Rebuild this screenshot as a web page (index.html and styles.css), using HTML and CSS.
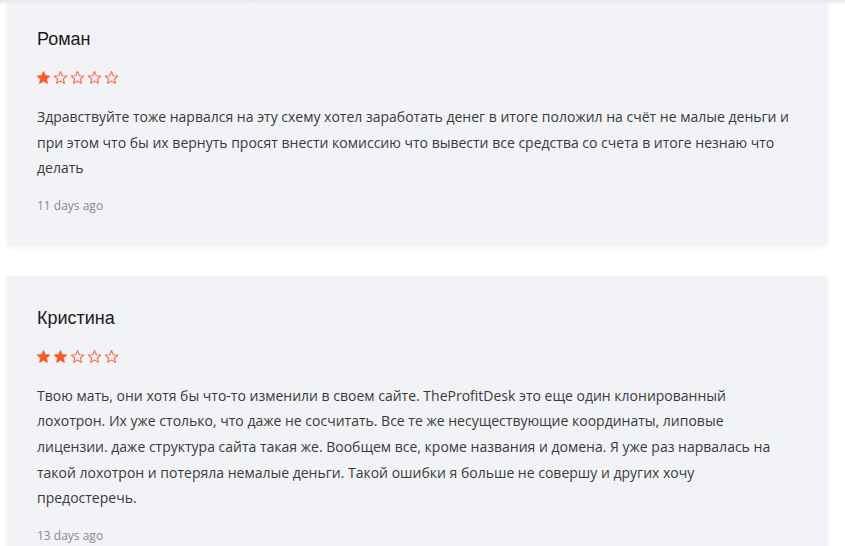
FILE: index.html
```html
<!DOCTYPE html>
<html lang="ru">
<head>
<meta charset="utf-8">
<link rel="stylesheet" href="styles.css">
</head>
<body>
<div class="topshade"></div>
<div class="list">
  <div class="card card-first">
    <div class="name">Роман</div>
    <div class="stars">
      <svg class="star full" viewBox="0 0 24 24"><path d="M12 2.5l2.9 6.6 7.1.6-5.4 4.7 1.6 7-6.2-3.7-6.2 3.7 1.6-7L2 9.7l7.1-.6z"/></svg>
      <svg class="star empty" viewBox="0 0 24 24"><path d="M12 2.5l2.9 6.6 7.1.6-5.4 4.7 1.6 7-6.2-3.7-6.2 3.7 1.6-7L2 9.7l7.1-.6z"/></svg>
      <svg class="star empty" viewBox="0 0 24 24"><path d="M12 2.5l2.9 6.6 7.1.6-5.4 4.7 1.6 7-6.2-3.7-6.2 3.7 1.6-7L2 9.7l7.1-.6z"/></svg>
      <svg class="star empty" viewBox="0 0 24 24"><path d="M12 2.5l2.9 6.6 7.1.6-5.4 4.7 1.6 7-6.2-3.7-6.2 3.7 1.6-7L2 9.7l7.1-.6z"/></svg>
      <svg class="star empty" viewBox="0 0 24 24"><path d="M12 2.5l2.9 6.6 7.1.6-5.4 4.7 1.6 7-6.2-3.7-6.2 3.7 1.6-7L2 9.7l7.1-.6z"/></svg>
    </div>
    <p class="text">Здравствуйте тоже нарвался на эту схему хотел заработать денег в итоге положил на счёт не малые деньги и при этом что бы их вернуть просят внести комиссию что вывести все средства со счета в итоге незнаю что делать</p>
    <div class="date">11 days ago</div>
  </div>
  <div class="card">
    <div class="name">Кристина</div>
    <div class="stars">
      <svg class="star full" viewBox="0 0 24 24"><path d="M12 2.5l2.9 6.6 7.1.6-5.4 4.7 1.6 7-6.2-3.7-6.2 3.7 1.6-7L2 9.7l7.1-.6z"/></svg>
      <svg class="star full" viewBox="0 0 24 24"><path d="M12 2.5l2.9 6.6 7.1.6-5.4 4.7 1.6 7-6.2-3.7-6.2 3.7 1.6-7L2 9.7l7.1-.6z"/></svg>
      <svg class="star empty" viewBox="0 0 24 24"><path d="M12 2.5l2.9 6.6 7.1.6-5.4 4.7 1.6 7-6.2-3.7-6.2 3.7 1.6-7L2 9.7l7.1-.6z"/></svg>
      <svg class="star empty" viewBox="0 0 24 24"><path d="M12 2.5l2.9 6.6 7.1.6-5.4 4.7 1.6 7-6.2-3.7-6.2 3.7 1.6-7L2 9.7l7.1-.6z"/></svg>
      <svg class="star empty" viewBox="0 0 24 24"><path d="M12 2.5l2.9 6.6 7.1.6-5.4 4.7 1.6 7-6.2-3.7-6.2 3.7 1.6-7L2 9.7l7.1-.6z"/></svg>
    </div>
    <p class="text">Твою мать, они хотя бы что-то изменили в своем сайте. TheProfitDesk это еще один клонированный лохотрон. Их уже столько, что даже не сосчитать. Все те же несуществующие координаты, липовые лицензии. даже структура сайта такая же. Вообщем все, кроме названия и домена. Я уже раз нарвалась на такой лохотрон и потеряла немалые деньги. Такой ошибки я больше не совершу и других хочу предостеречь.</p>
    <div class="date">13 days ago</div>
  </div>
</div>
</body>
</html>
```
FILE: styles.css
```css
html, body {
  margin: 0;
  padding: 0;
  background: #ffffff;
  overflow: hidden;
}
body {
  font-family: "Open Sans", "Liberation Sans", sans-serif;
}
.topshade {
  position: absolute;
  top: 0;
  left: 0;
  right: 0;
  height: 5px;
  background: linear-gradient(#e6e7eb, rgba(242, 243, 247, 0));
  z-index: 2;
}
.list {
  padding-left: 7px;
  width: 820px;
  display: flex;
  flex-direction: column;
  gap: 30px;
}
.card {
  background: #f2f3f7;
  padding: 30px 30px 31px;
  box-shadow: 0 1px 6px rgba(0, 0, 0, 0.05);
}
.card-first {
  margin-top: -3px;
}
.name {
  font-family: "Liberation Sans", Arial, sans-serif;
  font-size: 18px;
  line-height: 24px;
  color: #1b1b1b;
}
.stars {
  display: flex;
  gap: 2px;
  margin-top: 19px;
  height: 15px;
  margin-left: -1px;
}
.star {
  width: 15px;
  height: 15px;
}
.star.full path {
  fill: #ff5722;
  stroke: #ff5722;
  stroke-width: 1.5;
  stroke-linejoin: round;
}
.star.empty path {
  fill: none;
  stroke: #ff6b50;
  stroke-width: 1.8;
  stroke-linejoin: round;
}
.text {
  margin: 19px 0 0;
  font-size: 14px;
  line-height: 25.6px;
  color: #3a3a3a;
}
.date {
  margin-top: 16px;
  font-size: 12px;
  line-height: 18px;
  color: #8a8a8a;
}
```
